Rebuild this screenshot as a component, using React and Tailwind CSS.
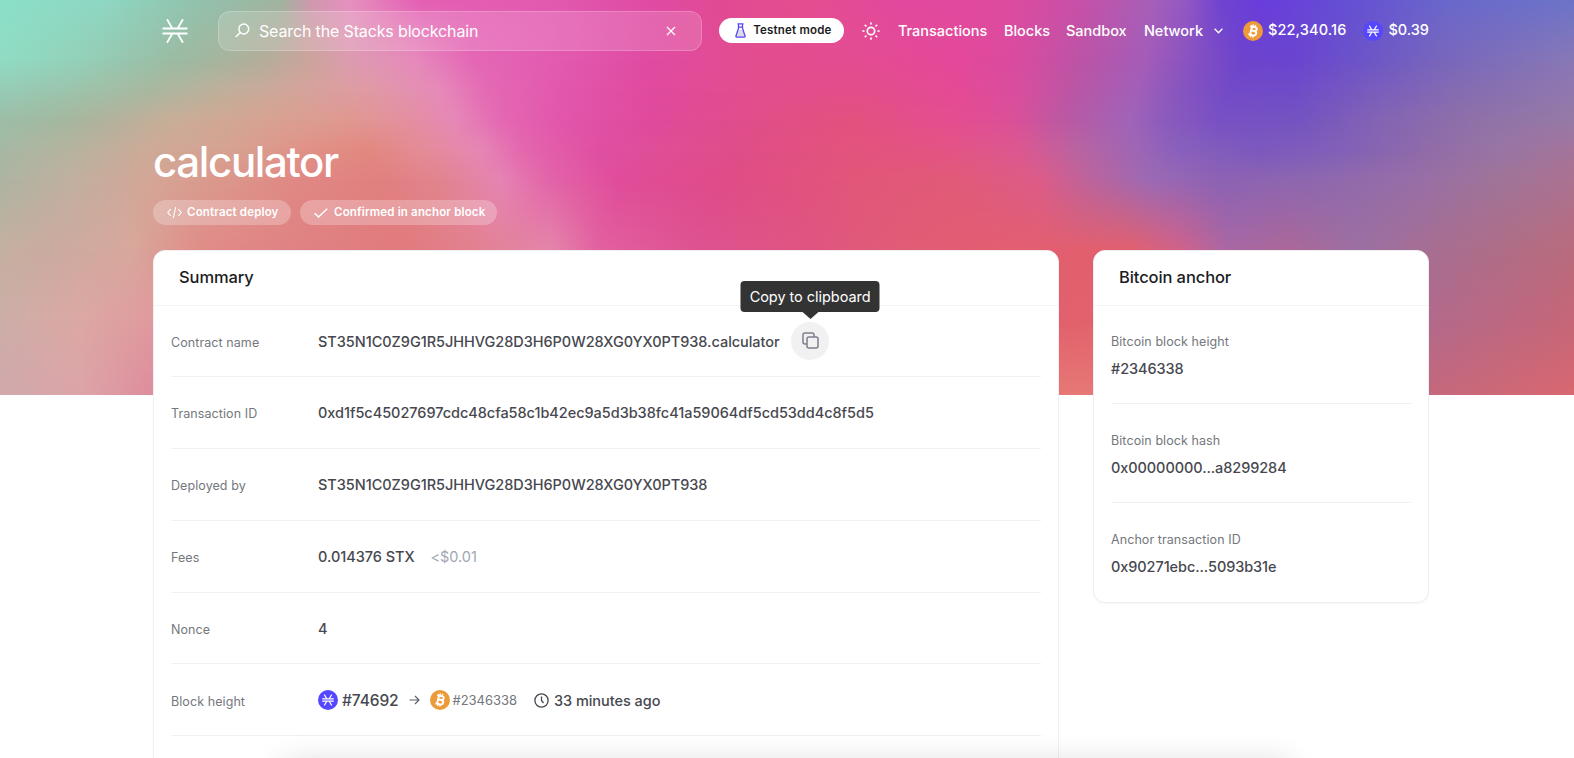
import React from "react";

const MESH = [
  [0, "0 #8be0c8,100 #8ed8c4,200 #92c2ac,280 #a0b4a0,312 #d098b0,350 #e690c0,420 #e45fb4,550 #e25ab0,650 #e04ba4,720 #e14a94,800 #e54e90,900 #e2499e,1000 #df4b9f,1080 #c850a8,1150 #a760b8,1185 #9458c4,1220 #7044d0,1260 #6a3cdc,1350 #6550d4,1450 #6a68cc,1574 #6c74c8"],
  [60, "0 #90dcc4,80 #94d0b8,180 #9cbaa2,260 #b2ae9a,310 #cca49c,350 #dc9cb0,415 #e68abc,470 #e468b6,560 #e25ab0,650 #e04ba2,760 #e24e8e,860 #e34c92,960 #e4489a,1020 #d84ca0,1080 #bc54a6,1145 #a45cb8,1190 #8852c0,1240 #6d44cc,1290 #6a44d0,1360 #6c54c8,1440 #7866bc,1574 #8878b6"],
  [90, "0 #96ccb6,70 #9cc4ac,150 #a8b8a0,220 #beb09a,300 #d4a49a,370 #e09aa4,440 #e68aba,485 #e46ab4,560 #e258ae,650 #e04a9e,760 #e24e8c,860 #e34e8a,960 #e44a96,1020 #d84e9e,1075 #ba56a6,1138 #a260b8,1175 #8a56be,1230 #724ac8,1295 #6f4cc8,1370 #785cbe,1455 #846cb2,1574 #9078ae"],
  [120, "0 #9cbea8,60 #a4b8a0,110 #b2b29c,170 #c8ae98,270 #d8a292,350 #e09890,410 #e48fa0,455 #e688b8,500 #e468b2,560 #e256ac,650 #df4a9c,750 #e04e8a,850 #e2527e,950 #e44e90,1010 #dc5098,1070 #b85aa4,1130 #a064b8,1160 #8e5cbc,1220 #7850c4,1300 #7454c0,1380 #8464b4,1470 #9070a8,1574 #967aa6"],
  [150, "0 #a6b8a4,65 #b4b49e,150 #ceaa98,240 #d8a090,300 #e09288,370 #e28880,425 #e48c98,482 #e686b6,520 #e468ae,600 #e04ea2,740 #df4e88,850 #e2547c,950 #e35484,1020 #dc5890,1080 #b864a2,1140 #9c66b6,1180 #8860bc,1260 #7c58be,1340 #8260b8,1430 #906ca8,1500 #9876a4,1574 #a4749a"],
  [180, "0 #aeb4a2,70 #c0b0a0,150 #d4a696,230 #dc968a,300 #e08884,380 #e28080,440 #e2848e,500 #e684b4,545 #e366aa,620 #e04c9a,720 #df4c88,850 #e2567a,950 #e25a78,1040 #dc5c88,1090 #bc649c,1150 #9c6ab4,1220 #8c62b4,1320 #8e68ae,1420 #986fa6,1500 #a07498,1574 #ac7290"],
  [250, "0 #c4b0a0,60 #ccaaa0,130 #d8a89c,200 #e08c88,300 #e08184,400 #e07a7c,470 #e2808e,550 #e486aa,600 #e260a0,700 #de5290,800 #df5482,900 #e15c76,1000 #e35e70,1130 #e2606e,1180 #d0628a,1230 #a868a4,1290 #ac6898,1360 #9c70a2,1440 #a86e90,1574 #b86c7c"],
  [320, "0 #ccaea8,80 #dca8a4,150 #e09a9e,1060 #e2606c,1093 #e2626c,1430 #b26a8c,1574 #c66678"],
  [395, "0 #d0a8ac,80 #dca4a8,153 #de8c9c,1060 #e67876,1093 #e67876,1430 #c4687c,1574 #d86870"],
];

function MeshBackground() {
  return (
    <svg className="absolute inset-x-0 top-0 h-[395px] w-full" viewBox="0 0 1574 395" preserveAspectRatio="none">
      <defs>
        {MESH.map(([y, stops], i) => (
          <React.Fragment key={y}>
            <linearGradient id={`h${i}`} gradientUnits="userSpaceOnUse" x1="0" y1="0" x2="1574" y2="0">
              {stops.split(",").map((s) => {
                const [x, color] = s.split(" ");
                return <stop key={x} offset={x / 1574} stopColor={color} />;
              })}
            </linearGradient>
            {i > 0 && (
              <>
                <linearGradient id={`v${i}`} gradientUnits="userSpaceOnUse" x1="0" y1={MESH[i - 1][0]} x2="0" y2={y}>
                  <stop offset="0" stopColor="#fff" stopOpacity="0" />
                  <stop offset="1" stopColor="#fff" stopOpacity="1" />
                </linearGradient>
                <mask id={`m${i}`} maskUnits="userSpaceOnUse" x="0" y="0" width="1574" height="395">
                  <rect width="1574" height="395" fill={`url(#v${i})`} />
                </mask>
              </>
            )}
          </React.Fragment>
        ))}
      </defs>
      {MESH.map(([y], i) => (
        <rect key={y} width="1574" height="395" fill={`url(#h${i})`} mask={i ? `url(#m${i})` : undefined} />
      ))}
    </svg>
  );
}

function StacksMark({ className, weight = 1.8 }) {
  return (
    <svg className={className} viewBox="0 0 26 26" fill="none" stroke="currentColor" strokeWidth={weight}>
      <path d="M0.5 10.500h25M0.5 15.500h25M5 1.300l5.400 9.200M21 1.300l-5.400 9.200M5 24.700l5.400-9.200M21 24.700l-5.400-9.200" />
    </svg>
  );
}

function StxCoin() {
  return (
    <span className="flex size-[20px] shrink-0 items-center justify-center rounded-full bg-[#5546ff] text-white">
      <StacksMark className="size-[12px]" weight={2.4} />
    </span>
  );
}

function BtcCoin() {
  return (
    <svg className="size-[20px] shrink-0" viewBox="0 0 32 32">
      <circle cx="16" cy="16" r="16" fill="#ed9a3a" />
      <g transform="rotate(13 16 16)" fill="none" stroke="#fff" strokeWidth="3.1">
        <path d="M10 9.2h7.7c4.6 0 4.6 6.4 0 6.4h-4.9M12.8 9.2v13.6M17.7 15.6c5.6 0 5.6 7.2 0 7.2H10" />
        <path strokeWidth="2.2" d="M14.2 5.5v4M18 5.5v4M14.2 22.5v4M18 22.5v4" />
      </g>
    </svg>
  );
}

function Row({ label, children }) {
  return (
    <div className="mx-[17px] flex h-[71.8px] items-center border-b border-[#f1f1f3]">
      <div className="w-[147px] pt-[4px] text-[12.5px] tracking-[0.08px] text-[#74777d]">{label}</div>
      <div className="flex items-center pt-px text-[14.5px] font-medium tracking-[-0.04px] text-[#47484f]">{children}</div>
    </div>
  );
}

function AnchorItem({ label, value, last }) {
  return (
    <div className={`mx-[17px] flex h-[98.8px] flex-col justify-center ${last ? "" : "border-b border-[#f1f1f3]"}`}>
      <div className="mt-[3px] text-[12.5px] leading-[20px] tracking-[0.08px] text-[#74777d]">{label}</div>
      <div className="mt-[6px] text-[14.5px] leading-[22px] font-medium tracking-[-0.08px] text-[#47484f]">{value}</div>
    </div>
  );
}

function CardHeader({ children }) {
  return (
    <div className="flex h-[54.5px] items-center border-b border-[#f3f3f5] pl-[25px] text-[16.5px] font-medium tracking-[-0.1px] text-[#1b1c22]">
      {children}
    </div>
  );
}

export default function App() {
  return (
    <div className="relative h-[758px] overflow-hidden bg-white pl-[153px] font-['Inter',sans-serif]">
      <MeshBackground />
      <div className="relative w-[1276px]">
        <header className="flex h-[61px] items-center text-white">
          <StacksMark className="ml-[9px] size-[26px]" />
          <div className="ml-[30px] flex h-[40px] w-[485px] items-center rounded-xl border border-white/20 bg-white/15 px-[16px]">
            <svg className="size-[15px]" viewBox="0 0 15 15" fill="none" stroke="currentColor" strokeWidth="1.5">
              <circle cx="8.8" cy="6" r="4.9" />
              <path d="M5.2 9.5L0.8 14" />
            </svg>
            <span className="ml-[9px] text-[16px] tracking-[-0.14px]">Search the Stacks blockchain</span>
            <svg className="mr-[9px] ml-auto size-[10px]" viewBox="0 0 10 10" fill="none" stroke="currentColor" strokeWidth="1.2">
              <path d="M1 1l8 8M9 1l-8 8" />
            </svg>
          </div>
          <div className="ml-[17px] flex h-[25px] w-[125px] items-center rounded-full bg-white pl-[16px]">
            <svg className="h-[15px] w-[11px]" viewBox="0 0 11 15" fill="none" stroke="#5546ff" strokeWidth="1.300">
              <path d="M2.6 7h5.8l1.6 7H1z" fill="#dcdce4" stroke="none" />
              <path d="M2.500 0.8h6M3.5 0.8v4.4L0.9 13.2q-.2 1 .8 1h7.6q1 0 .8-1L7.5 5.200V0.8M3.5 4.2h4" />
            </svg>
            <span className="mt-px ml-[7px] text-[11.5px] font-semibold tracking-[0.2px] whitespace-nowrap text-[#1b1c22]">Testnet mode</span>
          </div>
          <svg className="ml-[18px] size-[18px]" viewBox="0 0 18 18" fill="none" stroke="currentColor" strokeWidth="1.7" strokeLinecap="round">
            <circle cx="9" cy="9" r="3.7" />
            <path d="M9 1v.8M9 16.200v.8M1 9h.8M16.200 9h.8M3.300 3.300l.6.6M14.100 14.100l.6.6M14.700 3.300l-.6.6M3.900 14.100l-.6.6" />
          </svg>
          <nav className="mt-px ml-[18px] flex items-center text-[14.5px] font-medium whitespace-nowrap">
            <span className="w-[106px]">Transactions</span>
            <span className="w-[62px]">Blocks</span>
            <span className="w-[78px]">Sandbox</span>
            <span className="w-[70px]">Network</span>
            <svg className="h-[6px] w-[9px]" viewBox="0 0 9 6" fill="none" stroke="currentColor" strokeWidth="1.3">
              <path d="M0.600 0.800l3.900 4 3.900-4" />
            </svg>
          </nav>
          <div className="ml-[20px] flex items-center text-[14.5px] font-medium whitespace-nowrap">
            <BtcCoin />
            <span className="-mt-[2px] ml-[5px] w-[95.5px] tracking-[0.15px]">$22,340.16</span>
            <StxCoin />
            <span className="-mt-[2px] ml-[5px]">$0.39</span>
          </div>
        </header>

        <h1 className="mt-[73px] text-[42px] leading-[56px] font-medium tracking-[-1.35px] text-white">calculator</h1>
        <div className="mt-[10px] flex gap-[9px] text-[11.5px] font-semibold tracking-[0.17px] whitespace-nowrap text-white">
          <div className="flex h-[25px] w-[138px] items-center rounded-full bg-white/25 pl-[14px]">
            <svg className="h-[13px] w-[15px]" viewBox="0 0 15 13" fill="none" stroke="currentColor" strokeWidth="1.1">
              <path d="M3.800 3.200L0.800 6.500l3 3.300M11.200 3.200l3 3.300-3 3.300M8.700 1L6.300 12" />
            </svg>
            <span className="mt-px ml-[5px]">Contract deploy</span>
          </div>
          <div className="flex h-[25px] w-[197px] items-center rounded-full bg-white/25 pl-[14px]">
            <svg className="h-[10px] w-[14px]" viewBox="0 0 14 10" fill="none" stroke="currentColor" strokeWidth="1.500">
              <path d="M0.700 5.200l3.800 3.800L13.200 0.700" />
            </svg>
            <span className="mt-px ml-[6px]">Confirmed in anchor block</span>
          </div>
        </div>

        <main className="mt-[25px] flex items-start gap-[34px]">
          <section className="h-[560px] w-[906px] rounded-xl border border-[#f1f1f3] bg-white">
            <CardHeader>Summary</CardHeader>
            <Row label="Contract name">
              <span>ST35N1C0Z9G1R5JHHVG28D3H6P0W28XG0YX0PT938.calculator</span>
              <div className="relative -mt-px ml-[11.500px] flex size-[38px] items-center justify-center rounded-full bg-[#f1f1f2]">
                <svg className="size-[17px]" viewBox="0 0 17 17" fill="none" stroke="#7d7f8a" strokeWidth="1.500">
                  <rect x="5" y="5" width="11" height="11" rx="2" />
                  <path d="M5 12H3q-2 0-2-2V3q0-2 2-2h7q2 0 2 2v2" />
                </svg>
                <div className="absolute bottom-[48px] left-1/2 flex h-[31px] w-[139px] -translate-x-1/2 items-center justify-center rounded-[4px] bg-[#333] text-[14.5px] font-normal whitespace-nowrap text-white">
                  Copy to clipboard
                  <svg className="absolute top-full left-1/2 h-[7px] w-[16px] -translate-x-1/2" viewBox="0 0 16 7">
                    <path d="M0 0h16L8 7z" fill="#333" />
                  </svg>
                </div>
              </div>
            </Row>
            <Row label="Transaction ID">0xd1f5c45027697cdc48cfa58c1b42ec9a5d3b38fc41a59064df5cd53dd4c8f5d5</Row>
            <Row label="Deployed by">ST35N1C0Z9G1R5JHHVG28D3H6P0W28XG0YX0PT938</Row>
            <Row label="Fees">
              0.014376 STX <span className="ml-[16px] font-normal text-[#a1a7b3]">&lt;$0.01</span>
            </Row>
            <Row label="Nonce">4</Row>
            <Row label="Block height">
              <StxCoin />
              <span className="ml-[4px] text-[15.5px] tracking-[-0.1px]">#74692</span>
              <svg className="mr-[10px] ml-[10px] h-[10px] w-[11px]" viewBox="0 0 11 10" fill="none" stroke="#5f6169" strokeWidth="1.200">
                <path d="M0.500 5h9.500M6 1l4 4-4 4" />
              </svg>
              <BtcCoin />
              <span className="ml-[3px] text-[13px] font-normal text-[#74777d]">#2346338</span>
              <svg className="ml-[17px] size-[15px]" viewBox="0 0 15 15" fill="none" stroke="currentColor" strokeWidth="1.300">
                <circle cx="7.500" cy="7.500" r="6.600" />
                <path d="M7.500 3.500v4l2 2.500" />
              </svg>
              <span className="ml-[5px]">33 minutes ago</span>
            </Row>
          </section>
          <section className="w-[336px] rounded-xl border border-[#efeff1] bg-white shadow-[0_1px_2px_rgba(0,0,0,0.04)]">
            <CardHeader>Bitcoin anchor</CardHeader>
            <AnchorItem label="Bitcoin block height" value="#2346338" />
            <AnchorItem label="Bitcoin block hash" value="0x00000000...a8299284" />
            <AnchorItem label="Anchor transaction ID" value="0x90271ebc...5093b31e" last />
          </section>
        </main>
      </div>
      <div className="pointer-events-none absolute bottom-[-36px] left-[290px] h-[24px] w-[994px] shadow-[0_0_32px_6px_rgba(0,0,0,0.16)]" />
    </div>
  );
}
